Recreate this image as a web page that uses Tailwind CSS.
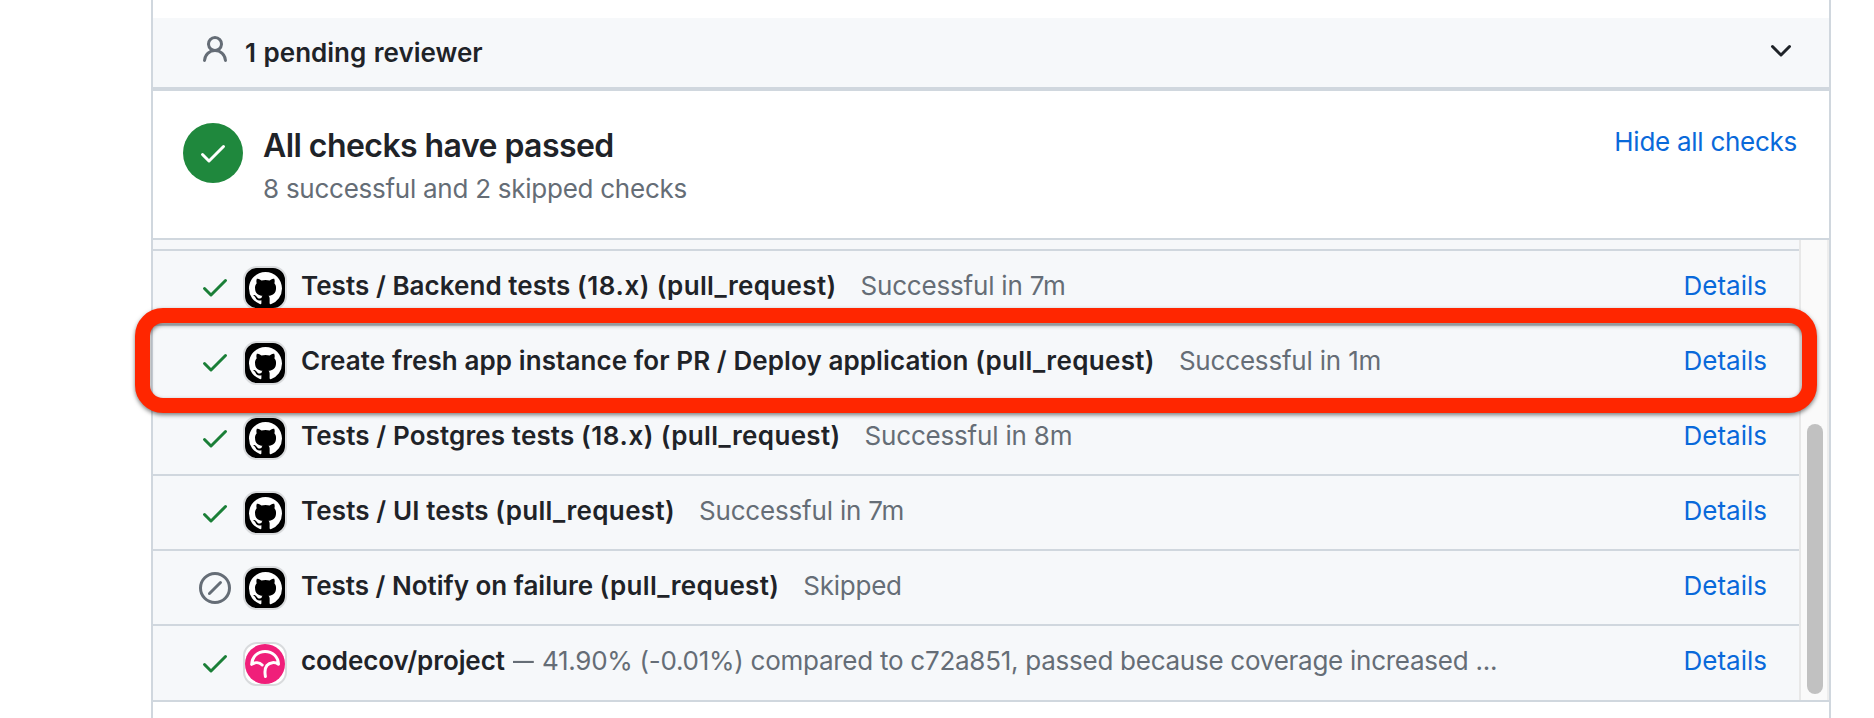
<!DOCTYPE html>
<html lang="en">
<head>
<meta charset="utf-8">
<title>Pull request checks</title>
<script src="https://cdn.jsdelivr.net/npm/@tailwindcss/browser@4"></script>
</head>
<body class="bg-white">
<svg class="hidden">
  <symbol id="check" viewBox="0 0 16 16"><path d="M13.78 4.22a.75.75 0 0 1 0 1.06l-7.25 7.25a.75.75 0 0 1-1.06 0L2.22 9.28a.751.751 0 0 1 .018-1.042.751.751 0 0 1 1.042-.018L6 10.94l6.72-6.72a.75.75 0 0 1 1.06 0Z"/></symbol>
  <symbol id="mark" viewBox="0 0 16 16"><path d="M8 0c4.42 0 8 3.58 8 8a8.013 8.013 0 0 1-5.45 7.59c-.4.08-.55-.17-.55-.38 0-.27.01-1.13.01-2.2 0-.75-.25-1.23-.54-1.48 1.78-.2 3.65-.88 3.65-3.95 0-.88-.31-1.59-.82-2.15.08-.2.36-1.02-.08-2.12 0 0-.67-.22-2.2.82-.64-.18-1.32-.27-2-.27-.68 0-1.36.09-2 .27-1.53-1.03-2.2-.82-2.2-.82-.44 1.1-.16 1.92-.08 2.12-.51.56-.82 1.28-.82 2.15 0 3.06 1.86 3.75 3.64 3.95-.23.2-.44.55-.51 1.07-.46.21-1.61.55-2.33-.66-.15-.24-.6-.83-1.23-.82-.67.01-.27.38.01.53.34.19.73.9.82 1.13.16.45.68 1.31 2.69.94 0 .67.01 1.3.01 1.49 0 .21-.15.45-.55.38A7.995 7.995 0 0 1 0 8c0-4.42 3.58-8 8-8Z"/></symbol>
  <symbol id="skip" viewBox="0 0 16 16"><path d="M8 0a8 8 0 1 1 0 16A8 8 0 0 1 8 0ZM1.5 8a6.5 6.5 0 1 0 13 0 6.5 6.5 0 0 0-13 0Zm9.78-2.22-5.5 5.5a.749.749 0 0 1-1.275-.326.749.749 0 0 1 .215-.734l5.5-5.5a.751.751 0 0 1 1.042.018.751.751 0 0 1 .018 1.042Z"/></symbol>
</svg>
<div class="relative h-[718px] w-[1874px] overflow-hidden bg-white pl-[151px] font-['Inter',sans-serif] text-[26px] leading-10 text-[#1f2328]">
  <main class="flex h-full w-[1680px] flex-col border-x-2 border-[#d0d7de]">
    <header class="mt-[18px] flex h-[73px] shrink-0 items-start border-b-4 border-[#d0d7de] bg-[#f6f8fa] pl-[46px] pr-8">
      <svg class="mt-4 size-8 fill-[#656d76]" viewBox="0 0 16 16"><path d="M10.561 8.073a6.005 6.005 0 0 1 3.432 5.142.75.75 0 1 1-1.498.07 4.5 4.5 0 0 0-8.99 0 .75.75 0 0 1-1.498-.07 6.004 6.004 0 0 1 3.431-5.142 3.999 3.999 0 1 1 5.123 0ZM10.5 5a2.5 2.5 0 1 0-5 0 2.5 2.5 0 0 0 5 0Z"/></svg>
      <h2 class="ml-[14px] mt-[15px] font-semibold tracking-[0px] [word-spacing:1px]">1 pending reviewer</h2>
      <svg class="ml-auto mt-[17px] size-8 fill-[#1f2328]" viewBox="0 0 16 16"><path d="M12.78 5.22a.749.749 0 0 1 0 1.06l-4.25 4.25a.749.749 0 0 1-1.06 0L3.22 6.28a.749.749 0 1 1 1.06-1.06L8 8.939l3.72-3.719a.749.749 0 0 1 1.06 0Z"/></svg>
    </header>
    <section class="flex h-[147px] shrink-0 items-start pl-[30px] pr-8">
      <span class="mt-8 flex size-[60px] items-start rounded-full bg-[#1f883d] pl-[14px] pt-[14px]"><svg class="size-8 fill-white"><use href="#check"/></svg></span>
      <div class="ml-5 mt-[34px]">
        <h1 class="text-[32px] font-semibold leading-[42px] tracking-[-0.56px]">All checks have passed</h1>
        <p class="mt-[2px] tracking-[-0.26px] text-[#656d76]">8 successful and 2 skipped checks</p>
      </div>
      <a class="ml-auto mt-[31px] tracking-[-0.27px] text-[#0969da]">Hide all checks</a>
    </section>
    <section class="flex h-[464px] shrink-0 border-y-2 border-[#d0d7de]">
      <div class="flex flex-1 flex-col bg-[#f6f8fa] pt-[9px]">
        <div class="flex h-[75px] items-start border-t-2 border-[#d0d7de] pl-[46px] pr-8">
          <svg class="mt-5 size-8 fill-[#1a7f37]"><use href="#check"/></svg>
          <span class="ml-3 mt-[15px] flex size-11 items-center justify-center rounded-[14px] border-2 border-[#d9dbdd] bg-black"><svg class="size-[33px] fill-white"><use href="#mark"/></svg></span>
          <span class="ml-[14px] mt-[15px] font-semibold tracking-[0.05px]">Tests / Backend tests <span class="tracking-[0.6px]">(18.x)</span> <span class="tracking-[0.34px]">(pull_request)</span></span>
          <span class="ml-6 mt-[15px] tracking-[-0.19px] text-[#656d76]">Successful in 7m</span>
          <a class="ml-auto mt-[15px] text-[#0969da]">Details</a>
        </div>
        <div class="flex h-[75px] items-start border-t-2 border-[#d0d7de] pl-[46px] pr-8">
          <svg class="mt-5 size-8 fill-[#1a7f37]"><use href="#check"/></svg>
          <span class="ml-3 mt-[15px] flex size-11 items-center justify-center rounded-[14px] border-2 border-[#d9dbdd] bg-black"><svg class="size-[33px] fill-white"><use href="#mark"/></svg></span>
          <span class="ml-[14px] mt-[15px] font-semibold tracking-[0.09px]">Create fresh app instance for PR / Deploy application <span class="tracking-[0.34px]">(pull_request)</span></span>
          <span class="ml-6 mt-[15px] tracking-[-0.19px] text-[#656d76]">Successful in 1m</span>
          <a class="ml-auto mt-[15px] text-[#0969da]">Details</a>
        </div>
        <div class="flex h-[75px] items-start border-t-2 border-[#d0d7de] pl-[46px] pr-8">
          <svg class="mt-[21px] size-8 fill-[#1a7f37]"><use href="#check"/></svg>
          <span class="ml-3 mt-[15px] flex size-11 items-center justify-center rounded-[14px] border-2 border-[#d9dbdd] bg-black"><svg class="size-[33px] fill-white"><use href="#mark"/></svg></span>
          <span class="ml-[14px] mt-[15px] font-semibold tracking-[0.12px]">Tests / Postgres tests <span class="tracking-[0.6px]">(18.x)</span> <span class="tracking-[0.34px]">(pull_request)</span></span>
          <span class="ml-6 mt-[15px] tracking-[-0.19px] text-[#656d76]">Successful in 8m</span>
          <a class="ml-auto mt-[15px] text-[#0969da]">Details</a>
        </div>
        <div class="flex h-[75px] items-start border-t-2 border-[#d0d7de] pl-[46px] pr-8">
          <svg class="mt-[21px] size-8 fill-[#1a7f37]"><use href="#check"/></svg>
          <span class="ml-3 mt-[15px] flex size-11 items-center justify-center rounded-[14px] border-2 border-[#d9dbdd] bg-black"><svg class="size-[33px] fill-white"><use href="#mark"/></svg></span>
          <span class="ml-[14px] mt-[15px] font-semibold tracking-[0.12px]">Tests / UI tests <span class="tracking-[0.34px]">(pull_request)</span></span>
          <span class="ml-6 mt-[15px] tracking-[-0.19px] text-[#656d76]">Successful in 7m</span>
          <a class="ml-auto mt-[15px] text-[#0969da]">Details</a>
        </div>
        <div class="flex h-[75px] items-start border-t-2 border-[#d0d7de] pl-[46px] pr-8">
          <svg class="mt-[21px] size-8 fill-[#656d76]"><use href="#skip"/></svg>
          <span class="ml-3 mt-[15px] flex size-11 items-center justify-center rounded-[14px] border-2 border-[#d9dbdd] bg-black"><svg class="size-[33px] fill-white"><use href="#mark"/></svg></span>
          <span class="ml-[14px] mt-[15px] font-semibold tracking-[0px]">Tests / Notify on failure <span class="tracking-[0.34px]">(pull_request)</span></span>
          <span class="ml-6 mt-[15px] tracking-[-0.25px] text-[#656d76]">Skipped</span>
          <a class="ml-auto mt-[15px] text-[#0969da]">Details</a>
        </div>
        <div class="flex h-[76px] items-start border-t-2 border-[#d0d7de] pl-[46px] pr-8">
          <svg class="mt-[21px] size-8 fill-[#1a7f37]"><use href="#check"/></svg>
          <span class="ml-3 mt-4 flex size-11 items-center justify-center rounded-[14px] border-2 border-[#d9dbdd] bg-white">
            <svg class="size-10" viewBox="0 0 40 40" fill="none" stroke="#fff" stroke-width="3" stroke-linecap="round" stroke-linejoin="round"><circle cx="20" cy="20" r="20" fill="#f01f7a" stroke="none"/><path d="M6.700 20.300C7 12.800 12.800 7.400 20.100 7.400S33.200 12.800 33.500 20.300C30 17.800 24.800 18 21.900 21.500C19.700 24.300 19.600 28 20.400 32.400M6.700 20.300C10 18.100 14.300 18.200 17.200 21"/></svg></span>
          <span class="ml-[14px] mt-[15px] font-semibold tracking-[-0.08px]">codecov/project</span>
          <span class="ml-[8px] mt-[15px] tracking-[-0.26px] text-[#656d76]"><span class="inline-block w-[22px] origin-left scale-x-[0.8]">—</span> 41.90% (-0.01%) compared to c72a851, passed because coverage increased ...</span>
          <a class="ml-auto mt-[15px] text-[#0969da]">Details</a>
        </div>
      </div>
      <div class="w-[30px] border-l-2 border-r-2 border-l-[#e8e8e8] border-r-[#ededed] bg-[#fafafa] pl-[6px] pt-[184px]">
        <div class="h-[270px] w-4 rounded-full bg-[#c1c1c1]"></div>
      </div>
    </section>
  </main>
  <div class="absolute left-[135px] top-[308px] h-[105px] w-[1682px] rounded-[28px] border-[15px] border-[#ff2600] drop-shadow-[0_2px_2px_rgba(0,0,0,0.5)]"></div>
</div>
</body>
</html>
